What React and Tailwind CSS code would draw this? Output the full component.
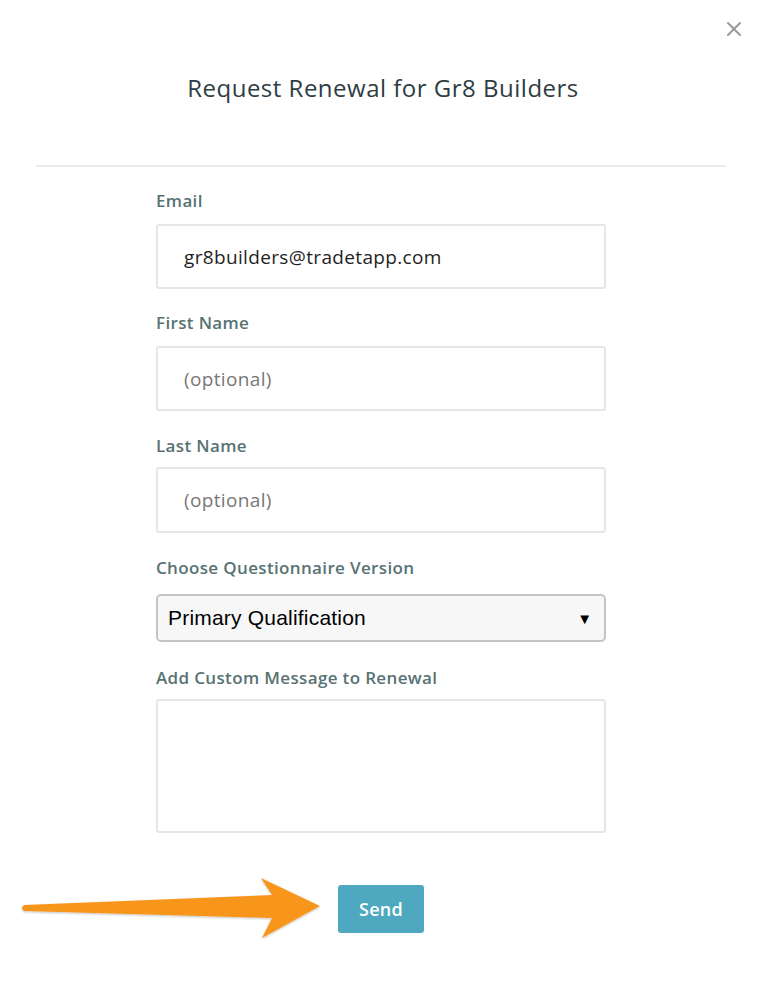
import { X } from "lucide-react";

function Field({ label, children, className = "" }) {
  return (
    <div className={className}>
      <label className="block text-[17px] leading-5 font-semibold tracking-[0.35px] text-[#587273]">{label}</label>
      {children}
    </div>
  );
}

export default function App() {
  return (
    <div className="relative min-h-[992px] w-full bg-white font-['Open_Sans',sans-serif]">
      {/* close */}
      <button className="absolute right-[20px] top-[17px] text-[#999999]">
        <X className="h-[24px] w-[24px]" strokeWidth={2} />
      </button>

      <h1 className="pt-[72px] text-center text-[24px] leading-[32px] tracking-[0.5px] text-[#2e3c44]">
        Request Renewal for Gr8 Builders
      </h1>

      <div className="ml-[36px] mr-[40px] mt-[61px] border-t-2 border-[#eaeaea]" />

      <form className="ml-[156px] w-[450px] pt-[24px]">
        <Field label="Email">
          <input
            defaultValue="gr8builders@tradetapp.com"
            className="mt-[13px] h-[65px] w-full rounded-[3px] border-2 border-[#e6e6e6] px-[26px] text-[19px] tracking-[0.35px] text-[#1f1f1f] outline-none"
          />
        </Field>

        <Field label="First Name" className="mt-[24px]">
          <input
            placeholder="(optional)"
            className="mt-[13px] h-[65px] w-full rounded-[3px] border-2 border-[#e6e6e6] px-[26px] text-[19px] tracking-[0.35px] outline-none placeholder:text-[#777777]"
          />
        </Field>

        <Field label="Last Name" className="mt-[25px]">
          <input
            placeholder="(optional)"
            className="mt-[11px] h-[66px] w-full rounded-[3px] border-2 border-[#e6e6e6] px-[26px] text-[19px] tracking-[0.35px] outline-none placeholder:text-[#777777]"
          />
        </Field>

        <Field label="Choose Questionnaire Version" className="mt-[25px]">
          <div className="mt-[16px] flex h-[48px] w-full items-center justify-between rounded-[5px] border-2 border-[#c4c4c4] bg-[#f7f7f7] pl-[10px] pr-[12px]">
            <span className="font-['Liberation_Sans',sans-serif] text-[21px] tracking-[0.2px] text-black">Primary Qualification</span>
            <span className="text-[15px] text-black">▼</span>
          </div>
        </Field>

        <Field label="Add Custom Message to Renewal" className="mt-[26px]">
          <textarea className="mt-[11px] block h-[134px] w-full resize-none rounded-[3px] border-2 border-[#e6e6e6] outline-none" />
        </Field>

        <div className="mt-[52px] flex justify-center">
          <button
            type="button"
            className="h-[48px] w-[86px] rounded-[3px] bg-[#4ea8c0] text-[18px] font-semibold tracking-[0.3px] text-white"
          >
            Send
          </button>
        </div>
      </form>

      {/* annotation arrow */}
      <svg
        className="pointer-events-none absolute left-0 top-[870px]"
        width="340"
        height="80"
        viewBox="0 870 340 80"
      >
        <defs>
          <filter id="sh" x="-10%" y="-30%" width="120%" height="160%">
            <feDropShadow dx="0" dy="1" stdDeviation="1.2" floodColor="#000" floodOpacity="0.25" />
          </filter>
        </defs>
        <path
          d="M24,905 L272,895 Q266,886 261,878 L320,906 L262,938 Q267,928 272,918 L24,911 Q20,908 24,905 Z"
          fill="#f8961e"
          filter="url(#sh)"
        />
      </svg>
    </div>
  );
}
